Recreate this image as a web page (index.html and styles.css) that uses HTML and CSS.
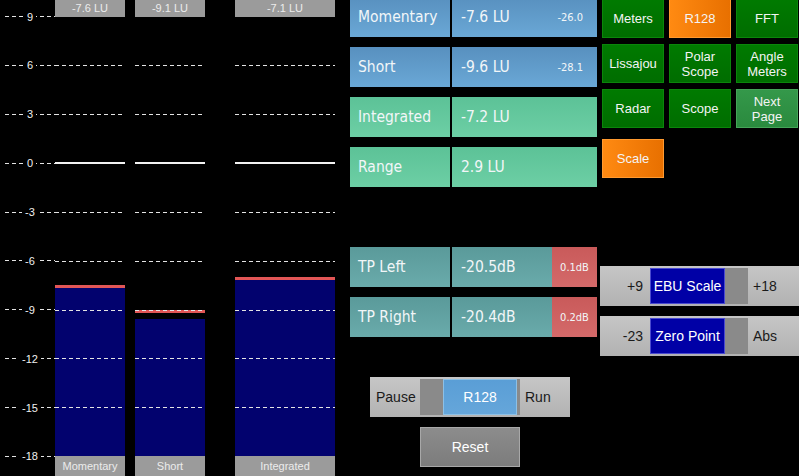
FILE: index.html
```html
<!DOCTYPE html>
<html>
<head>
<meta charset="utf-8">
<link rel="stylesheet" href="styles.css">
</head>
<body>
<div class="app">
  <section class="meter">
    <div class="scale">
      <div class="grid">
        <div class="tick"><span class="num">9</span></div>
        <div class="tick"><span class="num">6</span></div>
        <div class="tick"><span class="num">3</span></div>
        <div class="tick"><span class="num">0</span></div>
        <div class="tick"><span class="num">-3</span></div>
        <div class="tick"><span class="num">-6</span></div>
        <div class="tick"><span class="num">-9</span></div>
        <div class="tick"><span class="num">-12</span></div>
        <div class="tick"><span class="num">-15</span></div>
        <div class="tick"><span class="num">-18</span></div>
      </div>
    </div>

    <div class="chan chan-narrow">
      <div class="cap">-7.6 LU</div>
      <div class="track">
        <div class="fill" style="height:169.5px"></div>
        <div class="peak" style="bottom:168px"></div>
        <div class="lines">
          <i class="gl"></i><i class="gl"></i><i class="gl"></i><i class="gl zero"></i><i class="gl"></i><i class="gl"></i><i class="gl"></i><i class="gl"></i><i class="gl"></i><i class="gl"></i>
        </div>
      </div>
      <div class="cap">Momentary</div>
    </div>

    <div class="chan chan-narrow chan-short">
      <div class="cap">-9.1 LU</div>
      <div class="track">
        <div class="fill" style="height:136.9px"></div>
        <div class="peak" style="bottom:143.5px"></div>
        <div class="lines">
          <i class="gl"></i><i class="gl"></i><i class="gl"></i><i class="gl zero"></i><i class="gl"></i><i class="gl"></i><i class="gl"></i><i class="gl"></i><i class="gl"></i><i class="gl"></i>
        </div>
      </div>
      <div class="cap">Short</div>
    </div>

    <div class="chan chan-wide">
      <div class="cap">-7.1 LU</div>
      <div class="track">
        <div class="fill" style="height:176px"></div>
        <div class="peak" style="bottom:176px"></div>
        <div class="lines">
          <i class="gl"></i><i class="gl"></i><i class="gl"></i><i class="gl zero"></i><i class="gl"></i><i class="gl"></i><i class="gl"></i><i class="gl"></i><i class="gl"></i><i class="gl"></i>
        </div>
      </div>
      <div class="cap">Integrated</div>
    </div>
  </section>

  <section class="readouts">
    <div class="row">
      <div class="lab blue">Momentary</div>
      <div class="val blue"><span>-7.6 LU</span><span class="small">-26.0</span></div>
    </div>
    <div class="row">
      <div class="lab blue">Short</div>
      <div class="val blue"><span>-9.6 LU</span><span class="small">-28.1</span></div>
    </div>
    <div class="row">
      <div class="lab green">Integrated</div>
      <div class="val green"><span>-7.2 LU</span></div>
    </div>
    <div class="row">
      <div class="lab green">Range</div>
      <div class="val green"><span>2.9 LU</span></div>
    </div>
    <div class="row row-empty"></div>
    <div class="row">
      <div class="lab teal">TP Left</div>
      <div class="val teal val-tp"><span class="tpnum">-20.5dB</span><span class="over">0.1dB</span></div>
    </div>
    <div class="row">
      <div class="lab teal">TP Right</div>
      <div class="val teal val-tp"><span class="tpnum">-20.4dB</span><span class="over">0.2dB</span></div>
    </div>

    <div class="switch switch-run">
      <div class="sw-left">Pause</div>
      <div class="sw-track sw-track-right"><div class="thumb thumb-light">R128</div></div>
      <div class="sw-right">Run</div>
    </div>
    <div class="reset">Reset</div>
  </section>

  <section class="controls">
    <div class="btngrid">
      <div class="btn">Meters</div>
      <div class="btn orange">R128</div>
      <div class="btn">FFT</div>
      <div class="btn">Lissajou</div>
      <div class="btn">Polar<br>Scope</div>
      <div class="btn">Angle<br>Meters</div>
      <div class="btn">Radar</div>
      <div class="btn">Scope</div>
      <div class="btn next">Next<br>Page</div>
    </div>
    <div class="btngrid btngrid-second">
      <div class="btn orange">Scale</div>
    </div>

    <div class="switch switch-wide">
      <div class="sw-left sw-left-right">+9</div>
      <div class="sw-track"><div class="thumb thumb-dark">EBU Scale</div></div>
      <div class="sw-right">+18</div>
    </div>
    <div class="switch switch-wide">
      <div class="sw-left sw-left-right">-23</div>
      <div class="sw-track"><div class="thumb thumb-dark">Zero Point</div></div>
      <div class="sw-right">Abs</div>
    </div>
  </section>
</div>
</body>
</html>
```

FILE: styles.css
```css
html, body {
  margin: 0;
  padding: 0;
  background: #000;
}

body {
  width: 799px;
  height: 476px;
  overflow: hidden;
  font-family: "Liberation Sans", Arial, sans-serif;
}

.app {
  display: flex;
  height: 476px;
}

/* ---------- meter ---------- */
.meter {
  width: 350px;
  flex: none;
  display: flex;
  height: 476px;
}

.scale {
  width: 55px;
  flex: none;
  padding-top: 16px;
  box-sizing: border-box;
}

.grid {
  height: 441px;
  display: flex;
  flex-direction: column;
  justify-content: space-between;
  margin-left: 5px;
}

.tick {
  height: 1px;
  background: repeating-linear-gradient(to right, #e4e4e4 0 4px, transparent 4px 7px);
  display: flex;
  justify-content: center;
  align-items: center;
}

.num {
  background: #000;
  color: #f0f0f0;
  font-size: 11px;
  line-height: 12px;
  padding: 0 3px;
}

.chan {
  display: flex;
  flex-direction: column;
  height: 476px;
  flex: none;
}

.chan-narrow {
  width: 70px;
  margin-right: 10px;
}

.chan-short {
  margin-right: 30px;
}

.chan-wide {
  width: 100px;
}

.cap {
  position: relative;
  z-index: 3;
  background: #9b9b9b;
  color: #ececec;
  font-size: 11px;
  text-align: center;
  height: 17px;
  line-height: 16px;
}

.cap:last-child {
  height: 20px;
  line-height: 21px;
}

.track {
  flex: 1;
  position: relative;
}

.fill {
  position: absolute;
  left: 0;
  right: 0;
  bottom: 0;
  background: #02026e;
}

.peak {
  position: absolute;
  left: 0;
  right: 0;
  height: 3px;
  background: #e25656;
  z-index: 1;
}

.lines {
  position: absolute;
  left: 0;
  right: 0;
  top: -1px;
  height: 441px;
  display: flex;
  flex-direction: column;
  justify-content: space-between;
  z-index: 2;
}

.gl {
  display: block;
  height: 1px;
  background: repeating-linear-gradient(to right, #e4e4e4 0 4px, transparent 4px 7px);
}

.gl.zero {
  background: #f2f2f2;
  height: 2px;
}

/* ---------- readouts ---------- */
.readouts {
  width: 250px;
  flex: none;
  margin-top: -3px;
  display: flex;
  flex-direction: column;
}

.row {
  display: flex;
  gap: 2px;
  height: 40px;
  margin-bottom: 10px;
  font-family: "DejaVu Sans Condensed", "DejaVu Sans", sans-serif;
  font-size: 15.5px;
  color: #f2f6f8;
}

.row-empty {
  visibility: hidden;
}

.lab {
  width: 100px;
  box-sizing: border-box;
  padding-left: 8px;
  display: flex;
  align-items: center;
}

.val {
  width: 145px;
  box-sizing: border-box;
  padding-left: 9px;
  padding-right: 14px;
  display: flex;
  align-items: center;
  justify-content: space-between;
}

.small {
  font-size: 11px;
}

.blue {
  background: linear-gradient(#5890bf, #6aa8d6);
}

.green {
  background: linear-gradient(#5cc297, #6dcfa5);
}

.teal {
  background: linear-gradient(#5a9a9a, #6aabab);
}

.val-tp {
  padding-right: 0;
}

.tpnum {
  flex: 1;
}

.over {
  width: 45px;
  align-self: stretch;
  display: flex;
  align-items: center;
  justify-content: center;
  font-size: 11px;
  background: linear-gradient(#c95a5a, #d46a6a);
}

/* switches */
.switch {
  display: flex;
  height: 40px;
  background: linear-gradient(#c6c6c6, #b2b2b2);
  font-size: 14px;
  color: #1a1a1a;
}

.switch-run {
  width: 200px;
  margin-left: 20px;
  margin-top: 30px;
}

.sw-left {
  width: 50px;
  box-sizing: border-box;
  padding-left: 6px;
  display: flex;
  align-items: center;
}

.sw-left-right {
  justify-content: flex-end;
  padding-left: 0;
  padding-right: 7px;
}

.sw-right {
  flex: 1;
  padding-left: 5px;
  display: flex;
  align-items: center;
}

.sw-track {
  width: 98px;
  margin: 2px 0;
  background: #8a8a8a;
  display: flex;
}

.switch-run .sw-track {
  width: 100px;
}

.sw-track-right {
  justify-content: flex-end;
  padding-right: 3px;
  box-sizing: border-box;
}

.thumb {
  width: 75px;
  box-sizing: border-box;
  display: flex;
  align-items: center;
  justify-content: center;
  color: #fff;
  font-size: 14px;
}

.thumb-light {
  width: 74px;
  background: linear-gradient(#5a9ed6, #65a6da);
  border: 1px solid #8cc0e6;
}

.thumb-dark {
  background: #0000a6;
  border: 1px solid #4a4ad0;
}

.reset {
  width: 100px;
  height: 40px;
  margin-left: 70px;
  margin-top: 10px;
  box-sizing: border-box;
  border: 1px solid #a8a8a8;
  background: linear-gradient(#8c8c8c, #7c7c7c);
  color: #fff;
  font-size: 14px;
  display: flex;
  align-items: center;
  justify-content: center;
}

/* ---------- controls ---------- */
.controls {
  width: 199px;
  flex: none;
  display: flex;
  flex-direction: column;
}

.btngrid {
  display: grid;
  grid-template-columns: repeat(3, 62px);
  grid-auto-rows: 39px;
  column-gap: 5px;
  row-gap: 6px;
  margin-left: 2px;
  margin-top: -1px;
}

.btngrid-second {
  margin-top: 11px;
}

.btn {
  box-sizing: border-box;
  background: linear-gradient(#007a00, #006d00);
  border: 1px solid #0b860b;
  color: #f4f4f4;
  font-size: 13px;
  line-height: 15px;
  text-align: center;
  display: flex;
  align-items: center;
  justify-content: center;
}

.btn.orange {
  background: linear-gradient(to right, #ff8a12, #e87000);
  border-color: #ff9a30;
}

.btn.next {
  background: linear-gradient(#34984a, #2a8a3e);
  border-color: #45a458;
}

.switch-wide {
  width: 199px;
  margin-top: 88px;
}

.switch-wide + .switch-wide {
  margin-top: 10px;
}
```
